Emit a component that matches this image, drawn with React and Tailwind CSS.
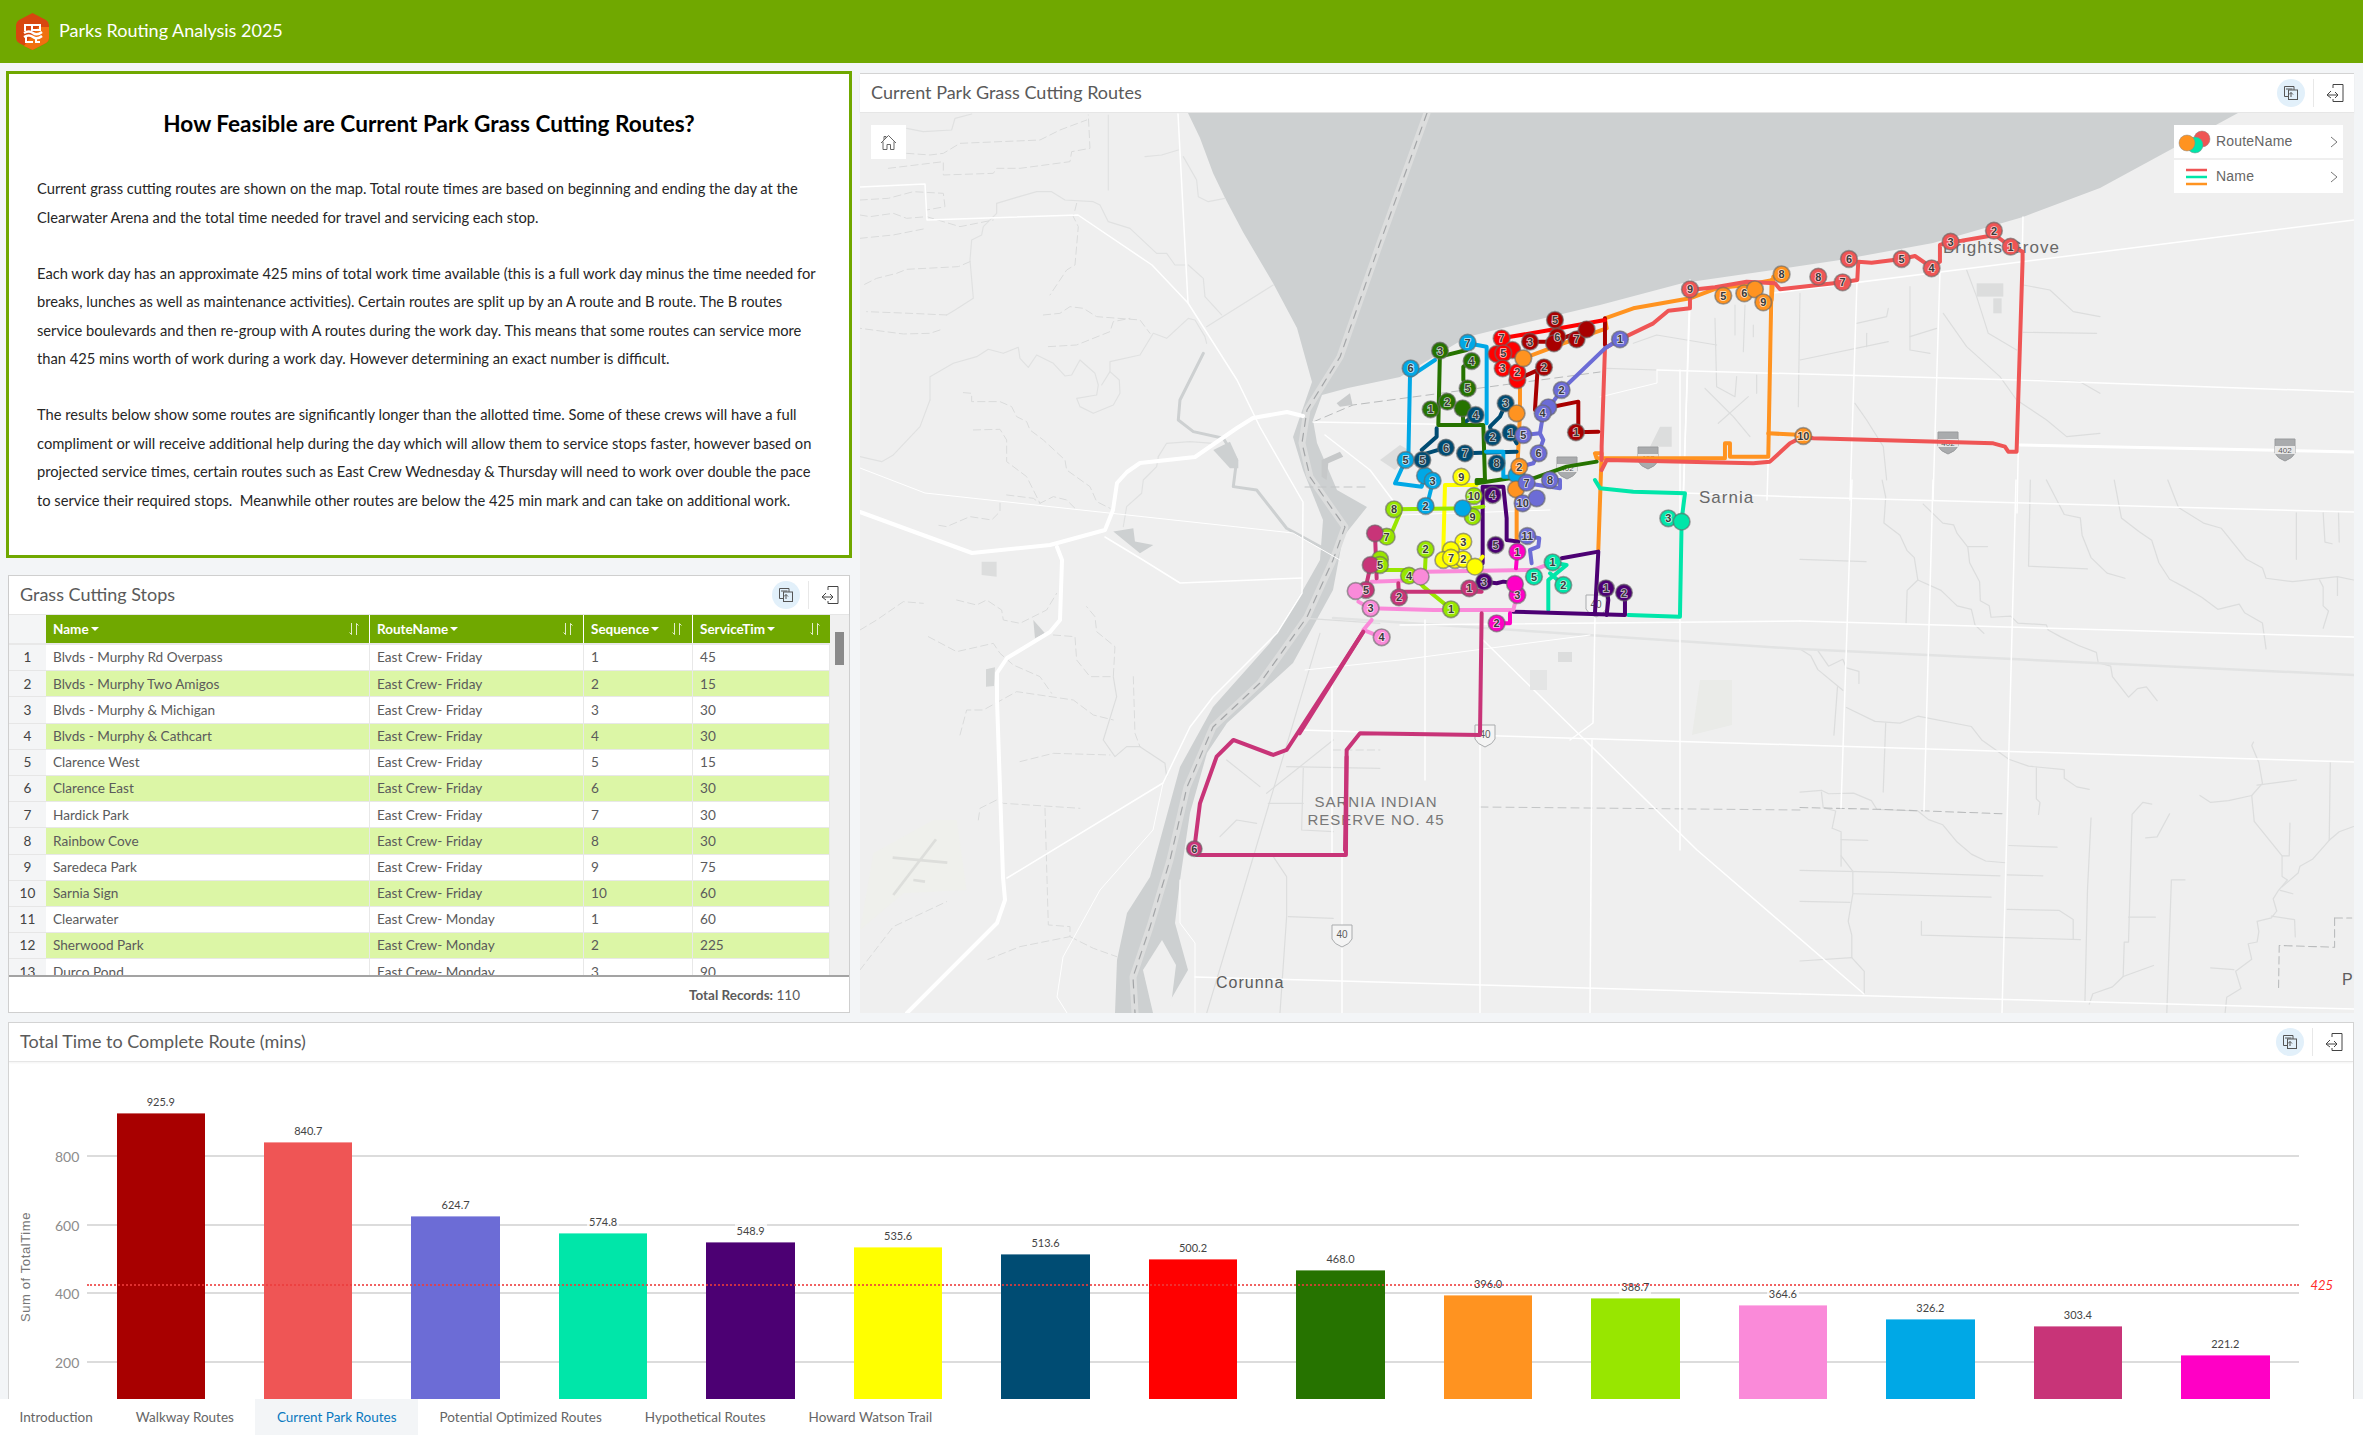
import React from 'react';

const C = {
  a: '#a80000', b: '#ef5555', c: '#6c6cd6', d: '#00e6a9', e: '#4c0073', f: '#ffff00', g: '#004c73', h: '#ff0000',
  i: '#267300', j: '#ff9320', k: '#98e600', l: '#fa8ad9', m: '#00a8e6', n: '#c83478', o: '#ff00c5',
};

const stops = [
  ['Blvds - Murphy Rd Overpass', 'East Crew- Friday', 1, 45],
  ['Blvds - Murphy Two Amigos', 'East Crew- Friday', 2, 15],
  ['Blvds - Murphy & Michigan', 'East Crew- Friday', 3, 30],
  ['Blvds - Murphy & Cathcart', 'East Crew- Friday', 4, 30],
  ['Clarence West', 'East Crew- Friday', 5, 15],
  ['Clarence East', 'East Crew- Friday', 6, 30],
  ['Hardick Park', 'East Crew- Friday', 7, 30],
  ['Rainbow Cove', 'East Crew- Friday', 8, 30],
  ['Saredeca Park', 'East Crew- Friday', 9, 75],
  ['Sarnia Sign', 'East Crew- Friday', 10, 60],
  ['Clearwater', 'East Crew- Monday', 1, 60],
  ['Sherwood Park', 'East Crew- Monday', 2, 225],
  ['Durco Pond', 'East Crew- Monday', 3, 90],
];

const bars = [
  [925.9, C.a], [840.7, C.b], [624.7, C.c], [574.8, C.d], [548.9, C.e], [535.6, C.f], [513.6, C.g], [500.2, C.h],
  [468.0, C.i], [396.0, C.j], [386.7, C.k], [364.6, C.l], [326.2, C.m], [303.4, C.n], [221.2, C.o],
];

// route lines, written in the coordinates of the city crop (1 unit = 1/3 px, origin 1300,280)
const routes = [
  ['j', '670,235 790,190 920,145 915,115 1000,85 1170,55 1250,25 1340,15 1420,0'],
  ['j', '1415,0 1405,530 1290,530 1290,490 1275,490 1275,535 890,535 885,520 905,520 895,810'],
  ['j', '660,235 660,400 650,610 650,780'],
  ['j', '1405,460 1510,465'],
  ['j', '1420,-10 1415,60'],
  ['b', '2132,-100 2085,-135 1985,-118 1952,-115 1920,-105 1920,-55 1895,-38 1845,-72 1805,-63 1715,-52 1675,-55 1672,0 1628,7 1440,28 1425,10 1340,5 1245,22 1170,30'],
  ['b', '2132,-100 2168,-85 2168,-60 2150,515 2125,515 2115,500 2080,490 1540,475 1510,470 1470,490 1410,545 1360,550 920,540 905,570'],
  ['b', '1170,30 1170,85 1105,92 1060,130 960,178 915,205 905,500 905,540'],
  ['a', '915,115 915,195'],
  ['a', '690,185 760,185 860,148'],
  ['a', '652,298 732,262 712,280 705,390 770,378 835,365 835,450 828,457 895,455'],
  ['h', '605,175 750,150 915,120'],
  ['h', '605,220 640,205'],
  ['h', '652,275 652,300'],
  ['c', '960,178 915,205 785,330 745,385 730,400 720,460 730,480 715,520 700,550 680,555'],
  ['c', '670,465 720,460'],
  ['c', '680,610 780,625 780,600 750,600'],
  ['c', '682,768 718,775 715,800 690,810 695,850'],
  ['d', '885,600 900,625 1000,635 1155,640 1145,720 1140,1010 985,1005'],
  ['d', '760,848 800,855 745,900 745,990'],
  ['d', '790,915 750,880'],
  ['e', '548,850 548,620 610,620 620,715 620,780 655,785'],
  ['e', '785,835 895,815 885,1000'],
  ['e', '640,995 975,1005 975,940'],
  ['e', '920,1005 925,960 920,925'],
  ['e', '552,905 590,910 610,905 645,910'],
  ['f', '530,615 435,615 430,810 430,840'],
  ['f', '548,830 525,860'],
  ['g', '618,370 600,410 570,440 578,472'],
  ['g', '632,458 650,490'],
  ['g', '495,520 650,515'],
  ['g', '438,503 380,520 365,540'],
  ['g', '410,445 410,470 365,510'],
  ['g', '525,405 490,430'],
  ['i', '420,212 415,435 550,435 555,600 530,600 530,610 630,595 700,595 800,560 890,545'],
  ['i', '420,230 500,210'],
  ['i', '515,245 490,260 490,300 505,325'],
  ['i', '488,385 490,435'],
  ['m', '503,190 560,200 560,430'],
  ['m', '405,240 330,290 325,540'],
  ['m', '317,540 285,610 365,620 375,590'],
  ['m', '375,590 400,600 380,680'],
  ['m', '558,515 610,515 610,590 650,590'],
  ['k', '282,688 520,685 550,680'],
  ['k', '300,700 270,770'],
  ['k', '240,870 325,870 370,920 450,985'],
  ['k', '378,808 375,870'],
  ['l', '362,890 380,875 700,870 760,848'],
  ['l', '215,905 360,900'],
  ['l', '212,985 400,990 640,990 650,950'],
  ['l', '175,965 210,985'],
  ['l', '215,1020 190,1050 245,1072'],
  ['n', '225,760 230,895'],
  ['n', '212,855 200,910 200,930'],
  ['n', '508,925 545,935 300,935 297,950 295,910'],
  ['n', '545,1000 540,1365 180,1360 140,1410 135,1710'],
  ['n', '190,1055 -1,1360'],
  ['o', '652,815 648,865'],
  ['o', '645,910 652,945'],
  ['o', '590,1030 630,1030 630,1000'],
];

// [label, x, y, colour] label '' = plain dot
const markers = [
  ['1', 2132, -100, 'b'], ['2', 2082, -148, 'b'], ['3', 1952, -115, 'b'], ['4', 1895, -35, 'b'], ['5', 1805, -63, 'b'], ['6', 1647, -63, 'b'], ['7', 1628, 7, 'b'], ['8', 1555, -10, 'b'], ['9', 1170, 28, 'b'],
  ['8', 1445, -17, 'j'], ['5', 1270, 47, 'j'], ['6', 1333, 40, 'j'], ['', 1365, 28, 'j'], ['9', 1390, 67, 'j'], ['10', 1510, 468, 'j'],
  ['5', 765, 120, 'a'], ['6', 772, 170, 'a'], ['7', 830, 178, 'a'], ['3', 690, 185, 'a'], ['', 762, 190, 'a'], ['', 860, 148, 'a'], ['2', 732, 262, 'a'], ['1', 828, 457, 'a'],
  ['7', 605, 175, 'h'], ['', 590, 222, 'h'], ['', 637, 210, 'h'], ['5', 610, 220, 'h'], ['3', 608, 265, 'h'], ['', 652, 300, 'h'], ['2', 652, 277, 'h'],
  ['3', 420, 212, 'i'], ['4', 515, 243, 'i'], ['5', 503, 325, 'i'], ['2', 442, 365, 'i'], ['1', 392, 388, 'i'], ['', 488, 385, 'i'],
  ['7', 503, 188, 'm'], ['6', 332, 265, 'm'], ['5', 317, 540, 'm'], ['', 375, 587, 'm'], ['3', 398, 602, 'm'], ['2', 377, 678, 'm'], ['', 650, 585, 'm'],
  ['3', 617, 370, 'g'], ['4', 527, 405, 'g'], ['1', 632, 458, 'g'], ['2', 578, 472, 'g'], ['6', 438, 503, 'g'], ['7', 495, 520, 'g'], ['5', 367, 540, 'g'], ['8', 590, 550, 'g'],
  ['', 670, 235, 'j'], ['', 650, 400, 'j'], ['2', 658, 560, 'j'], ['', 648, 628, 'j'],
  ['1', 960, 178, 'c'], ['2', 785, 330, 'c'], ['', 745, 382, 'c'], ['4', 728, 400, 'c'], ['5', 670, 465, 'c'], ['6', 716, 520, 'c'], ['8', 750, 600, 'c'], ['7', 680, 608, 'c'], ['10', 668, 670, 'c'], ['', 710, 655, 'c'], ['11', 682, 768, 'c'],
  ['10', 522, 648, 'k'], ['9', 518, 710, 'k'], ['', 488, 685, 'm'], ['8', 282, 688, 'k'], ['7', 260, 770, 'k'], ['2', 377, 808, 'k'], ['', 240, 838, 'k'], ['5', 240, 855, 'k'], ['4', 327, 887, 'k'], ['1', 453, 988, 'k'],
  ['9', 484, 590, 'f'], ['3', 490, 785, 'f'], ['', 453, 810, 'f'], ['', 465, 840, 'f'], ['2', 490, 838, 'f'], ['', 430, 840, 'f'], ['7', 453, 833, 'f'], ['', 525, 860, 'f'],
  ['4', 578, 645, 'e'], ['5', 587, 795, 'e'], ['3', 552, 905, 'e'], ['1', 918, 925, 'e'], ['2', 972, 938, 'e'],
  ['1', 652, 815, 'o'], ['3', 652, 945, 'o'], ['', 645, 912, 'o'], ['2', 590, 1030, 'o'],
  ['', 225, 760, 'n'], ['', 212, 855, 'n'], ['5', 198, 930, 'n'], ['2', 297, 952, 'n'], ['1', 508, 925, 'n'],
  ['', 362, 890, 'l'], ['', 167, 933, 'l'], ['3', 212, 985, 'l'], ['4', 245, 1072, 'l'],
  ['1', 758, 847, 'd'], ['5', 702, 890, 'd'], ['2', 790, 915, 'd'], ['3', 1105, 715, 'd'], ['', 1145, 725, 'd'],
];

// white roads in page pixels: [width, points]
const roads = [
  [4, '860,512 972,553 1050,545 1105,530 1113,510 1117,483 1127,472 1140,463 1195,457 1237,428 1253,418 1287,412 1303,416'],
  [4, '1057,547 1062,560 1060,620 1050,632 1007,658 997,673 997,700 1003,877 1005,900 997,923 907,1013'],
  [1.5, '860,187 925,184 927,220 1078,215 1152,265 1188,303 1237,380 1260,427 1303,502 1302,593 1277,633 1213,697 1190,727 1163,783 1007,878'],
  [1.5, '1178,114 1188,303'],
  [1, '860,468 925,493 1293,533 1340,560'],
  [1.5, '1105,537 1143,560 1180,583 1302,578'],
  [1, '1163,783 1153,830 1100,890 1063,957 1057,997 1067,1013'],
  [1, '1180,880 1180,923 1195,943 1195,1013'],
  [1.5, '1195,977 1800,994'],
  [1.5, '1800,497 2354,512'], [1.5, '1683,493 1800,497'],
  [1.5, '1400,625 1800,621'], [1.5, '1800,621 2354,637'],
  [1.5, '1300,730 1800,745 2354,762'],
  [1.5, '1800,994 2354,1009'],
  [1.5, '1852,480 1841,808'], [1.5, '1933,480 1924,811'], [1.5, '2016,480 2002,1013'],
  [1.5, '1595,617 1593,723 1570,740'], [1.5, '1592,740 1590,1013'], [1.5, '1483,640 1697,850 1864,994'],
  [1.5, '1680,370 1680,850'], [1.5, '1690,280 1680,613'],
  [1.5, '1657,370 2017,380 2354,392'], [1, '1600,397 1657,383 1657,370'],
  [3, '2020,445 2354,452'], [1.5, '1773,293 2100,252 2354,220'],
  [1.5, '2023,217 2017,513'], [1.5, '1940,270 1933,500'], [1.5, '1857,280 1850,500'], [1.5, '1773,300 1767,500'], [1.5, '1690,303 1683,500'],
  [1.5, '1313,422 1483,425'], [1.5, '1332,683 1332,853'], [1.5, '1342,857 1342,1013'], [1.5, '1480,737 1480,1013'],
  [1.5, '1425,620 1425,780'], [1, '1400,515 1550,510'], [1, '1305,670 1400,660 1590,635'],
  [1.5, '1325,435 1370,470 1400,510'],
];

const dashed8 = [
  '85,175 250,155 250,195 400,190 410,175 480,175 630,155 635,125 690,115 685,15',
  '140,130 210,135 250,130 300,100 540,90 600,60 680,30',
  '0,270 85,265 160,245 250,250 255,290 200,300',
  '0,315 30,320 100,310 140,325 200,320 300,350 400,330',
  '0,385 100,375 200,355',
  '330,455 295,470 140,478 110,490 50,505 10,525',
  '260,615 150,610 20,605',
  '240,660 210,670 130,672 0,655',
  '650,280 640,320 655,350 645,465 620,480 570,555',
  '550,615 600,610 630,590 670,595 710,620 840,630 870,670',
  '565,710 650,705 750,665 760,635 810,625',
  '310,848 335,850 335,875 420,875 455,890 470,920 500,935 510,960 550,990 615,1050 620,1080 690,1130 710,1175 750,1195',
  '340,960 420,958 440,990 440,1055 500,1100 520,1140 540,1180',
  '440,1155 520,1165 540,1180 580,1160 620,1170 645,1195',
  '420,1180 420,1205 395,1230 330,1220 260,1250 230,1245',
];
const solid8 = [
  '335,12 285,25 275,60 190,65 140,55',
  '745,15 745,240',
  '855,140 905,135 955,120',
  '970,140 1010,210 1015,260 1045,275 1095,265',
  '210,870 210,800 280,760 350,740 385,718 430,730 475,712 480,745 505,772 530,735 580,760 615,798 635,795 660,750 705,790 715,825 710,855 650,865 660,890 700,910 760,885 780,850 778,810 750,785 725,825',
  '210,870 180,950 100,1035 65,1055 0,1040',
  '750,785 750,755 840,735 880,670 920,685 985,625 1005,630 1035,680 1040,700',
  '985,465 1030,505 1035,560 1085,615',
  '1040,650 1240,525',
  '410,280 470,262 530,245 575,245 615,270 700,275 720,285 745,335 810,355 890,430 920,430 945,465 975,465',
  '410,280 410,310 370,350 365,375 335,390 330,450 340,565 285,600 260,615',
  '895,1040 920,1000 990,995 1060,1000',
  '895,1040 890,1070 850,1110 845,1150 800,1190 790,1250',
];
const dashed9 = [
  '0,210 50,180 130,125 190,130',
  '290,120 350,135 380,120 425,150 430,180 480,190 560,150 590,100',
  '205,230 290,275 400,250 420,280 460,315 540,350 575,400',
  '300,525 320,450 370,450 470,395 640,420 700,465 760,480',
  '580,225 645,230 650,300 690,350 760,350 765,260 710,215 705,170 680,140',
  '820,350 825,520 840,560',
  '480,605 580,580 750,585',
  '355,780 360,745 410,720 430,730 660,745',
  '555,745 565,1095 630,1100 630,1130 480,1160 380,1200',
  '630,1130 700,1165 770,1190',
  '0,1230 100,1100 260,1025',
  '1420,570 1560,570',
];
const solid9 = [
  '760,350 770,410 730,540 765,590 800,560 840,560 915,610 920,650',
  '1380,220 1040,1360',
  '1420,540 1220,700',
  '1240,890 1280,950 1280,1070 1260,1360',
  '1280,620 1560,625',
  '1330,625 1325,810 1420,815',
  '1225,730 1330,730',
  '1100,600 1200,680',
  '1080,830 1130,780 1190,790',
  '1285,1070 1420,1075',
  '1340,175 1560,190',
];
const solid10 = [
  '600,340 595,680', '600,540 865,485', '800,460 800,500', '930,320 930,510 990,520', '930,470 1010,445',
  '770,430 860,410 865,385', '1030,400 1100,500 1200,590 1250,660 1340,720 1400,770 1500,760',
  '1100,270 1130,350 1165,460 1250,510', '1270,315 1350,330 1420,395 1500,410', '1270,457 1490,460',
  '1250,600 1440,605 1500,640', '345,415 350,620 405,650 410,590', '315,625 400,710 450,770', '445,650 355,730',
  '470,585 470,640', '405,375 405,465', '435,375 430,515', '460,435 460,470', '20,565 170,570', '100,490 170,465 350,495',
  '765,670 800,720 850,800 860,900',
];
const solid11 = [
  '230,0 240,50 235,125 280,160 300,205 320,225 330,290 300,320 297,415',
  '330,290 395,320 440,365 480,375 490,420 515,445',
  '345,70 400,125 430,130 440,155 470,195 475,240 503,295 505,350 530,365 535,398 590,395 610,415 690,420 695,435 730,455 780,480 830,500 835,530 870,540 875,570 920,630 945,605 970,600 1000,640',
  '0,230 185,237', '470,193 525,193', '645,0 640,250 805,258',
  '690,0 710,40 740,100 785,110 790,160 815,225 860,270 910,285',
  '880,0 900,110 950,150 985,175 1005,240 1035,288 1075,310 1125,340 1170,375 1230,360 1245,385 1295,415 1305,490',
  '1030,0 1060,80 1130,125 1180,140 1250,230 1295,255 1305,285 1380,295 1505,280 1550,290',
  '1390,95 1390,230', '1465,95 1470,180 1490,185', '1508,95 1510,180', '1455,290 1465,310 1465,365 1480,380 1465,430', '1505,280 1505,335',
  '0,490 30,510 50,550 120,610', '50,495 80,540 120,520 130,545 165,555 165,590', '105,600 95,740',
  '130,660 210,700 280,705 330,685 480,715 510,755 585,810 640,830 740,840 740,865 775,890 810,897',
  '240,705 233,905', '662,835 662,925 672,935 668,970',
  '0,905 60,900 80,910 150,908 200,930 215,955 330,960 360,985 400,1000 440,1050 480,1085 520,1105 575,1110',
  '60,905 65,950 100,960 90,1010 115,1020 115,1120', '115,1090 148,1135 148,1200 135,1280 145,1320 145,1385 180,1425 180,1490',
  '115,1043 190,1045', '0,1132 260,1138 560,1148', '150,1200 535,1210', '0,1222 140,1225', '0,1395 145,1385',
  '585,1060 720,1065', '580,1145 680,1148', '580,1245 725,1248 765,1275 765,1332', '340,1280 340,1320 785,1333',
  '815,980 805,1190 798,1510', '985,940 960,935 930,970 920,1340 908,1340 905,1440 875,1470 820,1490 810,1520', '920,1268 995,1268', '905,1440 990,1408',
  '1035,968 1000,1035 968,1038', '1078,1160 1040,1160 1027,1550',
  '1270,760 1265,770 1285,820 1295,880 1265,915 1272,990 1350,1090 1350,1150 1365,1160 1340,1190 1325,1215 1335,1250 1320,1270 1280,1280 1285,1310 1280,1340 1255,1345 1265,1390 1220,1425 1235,1475 1195,1500 1190,1550',
  '1120,915 1150,935 1200,930 1265,915', '1280,885 1390,870', '1350,1090 1370,1090 1372,995', '1485,820 1482,1045 1435,1100 1400,1120 1395,1140 1350,1180',
  '1482,1045 1510,1020 1550,1005', '1345,1190 1380,1200', '1320,1265 1385,1275 1387,1325', '1150,1415 1215,1420',
];

const Line = ({ pts, ...rest }) => <polyline points={pts} fill="none" strokeLinejoin="round" strokeLinecap="round" {...rest} />;

const Shield = ({ x, y, label, dark }) => (
  <g transform={`translate(${x} ${y})`}>
    <path d="M-10,-10 L10,-10 L10,4 Q8,9 0,12 Q-8,9 -10,4 Z" fill={dark ? '#a9abad' : '#f4f4f4'} stroke={dark ? '#9a9c9e' : '#a9abad'} strokeWidth="1" />
    {dark && <rect x="-10" y="-3" width="20" height="8" fill="#e8e8e8" />}
    <text x="0" y={dark ? 4 : 3} textAnchor="middle" fontSize={dark ? 8 : 10} fontFamily="Liberation Sans, sans-serif" fill="#5c5c5c">{label}</text>
  </g>
);

const MapArt = () => (
  <svg viewBox="860 113 1494 900" className="block w-full h-full" preserveAspectRatio="none">
    <rect x="860" y="113" width="1494" height="900" fill="#efefef" />
    {/* lake and river */}
    <path
      d="M1188,113 L1200,138 L1213,173 L1225,198 L1243,232 L1273,283 L1297,328 L1312,382 L1293,437 L1303,470 L1323,520 L1320,560 L1303,590 L1270,643 L1213,707 L1180,767 L1150,877 L1127,913 L1117,960 L1115,1013 L1163,1013 L1188,970 L1175,923 L1180,880 L1190,813 L1207,753 L1227,723 L1293,663 L1333,590 L1343,537 L1367,507 L1337,490 L1317,443 L1313,420 L1322,395 L1348,388 L1400,377 L1467,337 L1507,327 L1600,305 L1683,283 L1773,270 L1840,260 L1933,243 L2023,217 L2100,188 L2238,113 Z"
      fill="#cdd0d1"
    />
    <path d="M1162,940 L1143,970 L1153,1013 L1170,1013 L1176,965 Z" fill="#efefef" />
    <Line pts="1427,113 1380,243 1340,357 1307,410 1302,443 1310,477 1345,527 1333,560 1307,617 1260,683 1213,727 1187,787 1170,860 1150,927 1133,977 1135,1013" stroke="#dcdddd" strokeWidth="7" />
    <Line pts="1427,113 1380,243 1340,357 1307,410 1302,443 1310,477 1345,527 1333,560 1307,617 1260,683 1213,727 1187,787 1170,860 1150,927 1133,977 1135,1013" stroke="#a3a5a7" strokeWidth="1.2" strokeDasharray="8 7" />
    <g transform="translate(860 110) scale(0.3333)">
      <Line pts="1030,730 960,870 955,930 1000,965 1090,985 1130,1050 1120,1130 1190,1140 1280,1255 1390,1315" stroke="#cdd0d1" strokeWidth="9" />
      <path d="M760,1265 L820,1255 L825,1295 L880,1305 L840,1330 Z" fill="#cdd0d1" />
      <path d="M1060,1020 L1110,995 L1135,1050 L1135,1075 L1110,1075 Z" fill="#cdd0d1" />
      <path d="M1385,1050 L1440,1025 L1450,1040 L1405,1060 L1400,1110 L1385,1100 Z" fill="#c6c8c9" />
      <path d="M1430,880 L1470,850 L1478,885 L1440,890 Z" fill="#c9cbcc" />
      {solid8.map((p, i) => <Line key={i} pts={p} stroke="#e0e1e1" strokeWidth="3.5" />)}
      {dashed8.map((p, i) => <Line key={i} pts={p} stroke="#dadbdb" strokeWidth="3" strokeDasharray="22 12" />)}
    </g>
    <g transform="translate(860 560) scale(0.3333)">
      <path d="M40,880 L220,780 L290,780 L320,990 L130,1000 L0,1110 Z" fill="#eff0ec" />
      <g stroke="#dddedb" strokeWidth="8" fill="none">
        <path d="M100,1005 L228,838" /><path d="M98,893 L262,908" /><path d="M160,960 L195,965" />
      </g>
      <path d="M365,5 L410,5 L410,50 L365,45 Z" fill="#dcdddd" />
      <path d="M520,180 L555,220 L525,235 Z" fill="#cfd1d2" />
      <path d="M378,328 L405,322 L402,378 L378,380 Z" fill="#d4d6d6" />
      {solid9.map((p, i) => <Line key={i} pts={p} stroke="#dcdddd" strokeWidth="3.5" />)}
      {dashed9.map((p, i) => <Line key={i} pts={p} stroke="#dadbdb" strokeWidth="3" strokeDasharray="22 12" />)}
    </g>
    <g transform="translate(1600 180) scale(0.3333)">
      <path d="M1130,310 L1210,310 L1210,350 L1130,350 Z" fill="#dcdddd" />
      <path d="M1180,355 L1205,355 L1205,400 L1180,400 Z" fill="#dcdddd" />
      <path d="M180,740 L215,740 L215,800 L150,800 Z" fill="#dcdddd" />
      {solid10.map((p, i) => <Line key={i} pts={p} stroke="#dcdddd" strokeWidth="3.5" />)}
    </g>
    <g transform="translate(1800 480) scale(0.3571 0.3448)">
      {solid11.map((p, i) => <Line key={i} pts={p} stroke="#dcdddd" strokeWidth="3.5" />)}
      <Line pts="0,950 220,955 570,968" stroke="#b9bbbc" strokeWidth="3" strokeDasharray="22 12" />
      <Line pts="1497,1270 1545,1270" stroke="#b9bbbc" strokeWidth="3" strokeDasharray="22 12" />
      <Line pts="1497,1270 1497,1355 1342,1350 1340,1480" stroke="#b9bbbc" strokeWidth="3" strokeDasharray="22 12" />
    </g>
    <Line pts="1333,618 1800,649 2354,675" stroke="#e2e3e3" strokeWidth="2.5" />
    <Line pts="1313,422 1353,405 1600,372" stroke="#b9bbbc" strokeWidth="1" strokeDasharray="8 5" />
    <Line pts="1305,487 1370,487" stroke="#c3c5c6" strokeWidth="1" strokeDasharray="8 5" />
    <Line pts="1480,807 1800,810" stroke="#c3c5c6" strokeWidth="1" strokeDasharray="8 5" />
    {roads.map(([w, p], i) => <Line key={i} pts={p} stroke="#ffffff" strokeWidth={w} />)}
    {/* city blocks */}
    <path d="M1380,460 L1400,445 L1412,452 L1395,470 Z" fill="#dcdddd" />
    <path d="M1530,670 L1547,670 L1547,690 L1530,690 Z" fill="#e4e5e5" />
    <path d="M1558,652 L1572,652 L1572,662 L1558,662 Z" fill="#dcdddd" />
    <path d="M1700,680 L1732,680 L1732,725 L1692,735 Z" fill="#eaebe8" />

    <Shield x={1567} y={467} label="402" dark />
    <Shield x={1648} y={457} label="402" dark />
    <Shield x={1948} y={442} label="402" dark />
    <Shield x={2285} y={449} label="402" dark />
    <Shield x={1342} y={935} label="40" />
    <Shield x={1596} y={605} label="40" />
    <Shield x={1485} y={735} label="40" />

    <g fontFamily="Liberation Sans, sans-serif">
      <text x="1699" y="503" fontSize="17" letterSpacing="1" fill="#686868">Sarnia</text>
      <text x="1943" y="253" fontSize="17" letterSpacing="1" fill="#686868">Brights Grove</text>
      <text x="1376" y="807" fontSize="15" letterSpacing="1" textAnchor="middle" fill="#777">SARNIA INDIAN</text>
      <text x="1376" y="825" fontSize="15" letterSpacing="1" textAnchor="middle" fill="#777">RESERVE NO. 45</text>
      <text x="1216" y="988" fontSize="16" letterSpacing="1" fill="#5c5c5c">Corunna</text>
      <text x="2342" y="985" fontSize="16" fill="#5c5c5c">P</text>
    </g>

    <g transform="translate(860 560) scale(0.3333)">
      <Line pts="1460,590 1458,885 1010,885 1003,866 1020,730 1070,590 1120,540 1240,585 1280,570 1410,370 1510,215" stroke={C.n} strokeWidth="12" />
    </g>
    <g transform="translate(1300 280) scale(0.3333)">
      {routes.map(([c, p], i) => <Line key={i} pts={p} stroke={C[c]} strokeWidth="12" />)}
      {markers.map(([t, x, y, c], i) => (
        <circle key={i} cx={x} cy={y} r="25" fill={C[c]} stroke="#666" strokeOpacity="0.6" strokeWidth="5" />
      ))}
      {markers.filter((m) => m[0]).map(([t, x, y], i) => (
        <text key={i} x={x} y={y + 12} textAnchor="middle" fontSize="33" fontWeight="700" fontFamily="Liberation Sans, sans-serif" fill="#3a3a3a" stroke="#ffffff" strokeOpacity="0.75" strokeWidth="5" paintOrder="stroke">{t}</text>
      ))}
    </g>
    <g transform="translate(860 560) scale(0.3333)">
      <circle cx="1003" cy="866" r="23" fill={C.n} stroke="#666" strokeOpacity="0.6" strokeWidth="5" />
      <text x="1003" y="878" textAnchor="middle" fontSize="33" fontWeight="700" fontFamily="Liberation Sans, sans-serif" fill="#3a3a3a" stroke="#ffffff" strokeOpacity="0.75" strokeWidth="5" paintOrder="stroke">6</text>
    </g>
  </svg>
);

const PanelIcons = () => (
  <div className="flex items-center">
    <div className="w-[28px] h-[28px] rounded-full bg-[#e2f0fa] flex items-center justify-center">
      <svg width="16" height="16" viewBox="0 0 16 16" fill="none" stroke="#555" strokeWidth="1">
        <path d="M5.5 11.5H1.5V1.5H11V5" />
        <rect x="5.5" y="5" width="9" height="9.5" />
        <path d="M3 4H9.5M10 9.5L8 7.5L6 9.5M8 7.5V12" />
      </svg>
    </div>
    <div className="w-px h-[28px] bg-[#e8e8e8] ml-[8px] mr-[12px]" />
    <svg width="18" height="20" viewBox="0 0 18 20" fill="none" stroke="#444" strokeWidth="1">
      <path d="M7 5V1.5H17V18.5H7V16" />
      <path d="M5 8L1 12L5 15M1.5 12H12M9 9L12 12L9 15" />
    </svg>
  </div>
);

const PanelTitle = ({ title, className }) => (
  <div className={`flex items-center justify-between shrink-0 border-b border-[#e6e6e6] shadow-[0_1px_2px_rgba(0,0,0,0.05)] pr-[10px] bg-white ${className}`}>
    <span className="text-[18px] text-[#5a5a5a]">{title}</span>
    <PanelIcons />
  </div>
);

const SortIcon = () => (
  <svg width="12" height="14" viewBox="0 0 12 14" fill="none" stroke="#fff" strokeOpacity="0.8" strokeWidth="1">
    <path d="M3.5 1V12.5M1.5 10.5L3.5 12.5M8.5 13V1.5M8.5 1.5L10.5 3.5" />
  </svg>
);

const cols = ['w-[324px]', 'w-[214px]', 'w-[109px]', 'w-[137px]'];

const HeadCell = ({ label, w }) => (
  <div className={`${w} shrink-0 h-full bg-[#70a800] flex items-center justify-between pl-[7px] pr-[9px] border-r border-white last:border-r-0`}>
    <span className="flex items-center gap-[2px] text-[13.5px] font-bold text-white">
      {label}
      <span className="w-0 h-0 border-x-[4px] border-x-transparent border-t-[4px] border-t-white mb-[1px]" />
    </span>
    <SortIcon />
  </div>
);

const StopsTable = () => (
  <div className="flex flex-col h-[438px] bg-white border border-[#cfcfcf]">
    <PanelTitle title="Grass Cutting Stops" className="h-[39px] pl-[11px] pb-[1px]" />
    <div className="flex h-[360px] shrink-0 overflow-hidden">
      <div className="w-[821px] shrink-0">
        <div className="flex h-[28px]">
          <div className="w-[37px] shrink-0 bg-[#f4f5f6]" />
          {['Name', 'RouteName', 'Sequence', 'ServiceTim'].map((h, i) => (
            <HeadCell key={h} label={h} w={cols[i]} />
          ))}
        </div>
        <div className="h-[2px] bg-[#e8e8e8]" />
        {stops.map((r, i) => (
          <div key={i} className="flex h-[26.2px] items-center text-[13.6px] text-[#5b5b5b]">
            <div className="w-[37px] shrink-0 h-full flex items-center justify-center bg-[#f4f5f6] text-[#444] border-b border-[#e6e6e6]">{i + 1}</div>
            {r.map((v, j) => (
              <div key={j} className={`${cols[j]} shrink-0 h-full flex items-center pl-[7px] border-r border-b border-[#e8e8e8] ${i % 2 ? 'bg-[#dcf6a6]' : 'bg-white'}`}>{v}</div>
            ))}
          </div>
        ))}
      </div>
      <div className="flex-1 bg-[#f0f0f0] pt-[17px] px-[5px]">
        <div className="h-[33px] bg-[#8a8a8a]" />
      </div>
    </div>
    <div className="flex-1 border-t-2 border-[#a3a3a3] flex items-center justify-end pr-[49px] pt-[2px] text-[13.5px] text-[#5b5b5b]">
      <span><b className="font-bold">Total Records:</b> 110</span>
    </div>
  </div>
);

const Chart = () => (
  <div className="h-[377px] ml-[8px] mt-[9px] w-[2346px] shrink-0 bg-white border border-[#d3d3d3] border-b-0 flex flex-col overflow-hidden">
    <PanelTitle title="Total Time to Complete Route (mins)" className="h-[39px] pl-[11px] pb-[1px]" />
    <div className="relative flex-1 pl-[78px] pr-[54px]">
      <div className="absolute left-[17px] top-[205px] -translate-x-1/2 -translate-y-1/2 -rotate-90 whitespace-nowrap text-[13px] text-[#777] [font-family:'Liberation_Sans',sans-serif] tracking-[0.6px]">Sum of TotalTime</div>
      {[[800, 'top-[94px]'], [600, 'top-[163px]'], [400, 'top-[231px]'], [200, 'top-[300px]']].map(([v, t]) => (
        <div key={v} className={`absolute left-[46px] right-[54px] ${t} flex items-center h-0`}>
          <span className="w-[32px] text-[14px] text-[#8c8c8c]">{v}</span>
          <span className="flex-1 h-[1.5px] bg-[#dcdcdc]" />
        </div>
      ))}
      <div className="relative h-full flex">
        {bars.map(([v, c]) => (
          <div key={v} className="flex-1 flex flex-col items-center justify-end">
            <span className="text-[11px] leading-[14px] mb-[4px] text-[#444] bg-white/70 px-[2px]">{v.toFixed(1)}</span>
            <div className="w-[60%] border-t border-white/40" style={{ height: (v - 91.5) * 0.343, backgroundColor: c }} />
          </div>
        ))}
      </div>
      <div className="absolute left-[78px] right-[54px] top-[222px] border-t-2 border-dotted border-[#ec3b3b]/80" />
      <span className="absolute right-[20px] top-[214px] text-[13px] italic text-[#ff2a2a]">425</span>
    </div>
  </div>
);

const tabs = ['Introduction', 'Walkway Routes', 'Current Park Routes', 'Potential Optimized Routes', 'Hypothetical Routes', 'Howard Watson Trail'];

const Logo = () => (
  <svg width="33" height="37" viewBox="0 0 33 37">
    <path d="M16.5 0L30 7Q33 9 33 12V25Q33 28 30 30L16.5 37L3 30Q0 28 0 25V12Q0 9 3 7Z" fill="#d8460f" />
    <path d="M33 14V25Q33 28 30 30L16.5 37L8 33L22 14Z" fill="#f0700f" />
    <g fill="none" stroke="#fff" strokeWidth="2">
      <path d="M9 18V12H16M14 12H24V17H16V12" />
      <path d="M8 20Q13 17 17 20T26 19" strokeWidth="2.4" />
      <path d="M8 24Q13 21 17 24T26 23" strokeWidth="2.4" />
      <path d="M10 24V29H17M20 25V29H24" />
    </g>
  </svg>
);

export default function App() {
  return (
    <div className="w-[2363px] h-[1435px] overflow-hidden flex flex-col bg-[#f3f5f7] [font-family:Lato,sans-serif]">
      <header className="h-[63px] shrink-0 bg-[#70a800] flex items-center pl-[16px] gap-[10px]">
        <Logo />
        <span className="text-[18px] text-white mb-[2px]">Parks Routing Analysis 2025</span>
      </header>

      <div className="flex h-[950px] pt-[8px] pl-[6px] shrink-0">
        <div className="w-[846px] shrink-0 flex flex-col">
          <div className="h-[487px] shrink-0 bg-white border-[3px] border-[#70a800] px-[28px] text-[14.7px] leading-[28.5px] text-[#262626]">
            <h1 className="text-center text-[22.6px] font-bold text-black mt-[35px] mb-[35px] leading-[30px]">How Feasible are Current Park Grass Cutting Routes?</h1>
            <p>Current grass cutting routes are shown on the map. Total route times are based on beginning and ending the day at the Clearwater Arena and the total time needed for travel and servicing each stop.</p>
            <p className="mt-[27.5px]">Each work day has an approximate 425 mins of total work time available (this is a full work day minus the time needed for breaks, lunches as well as maintenance activities). Certain routes are split up by an A route and B route. The B routes service boulevards and then re-group with A routes during the work day. This means that some routes can service more than 425 mins worth of work during a work day. However determining an exact number is difficult.</p>
            <p className="mt-[27.5px]">The results below show some routes are significantly longer than the allotted time. Some of these crews will have a full compliment or will receive additional help during the day which will allow them to service stops faster, however based on projected service times, certain routes such as East Crew Wednesday &amp; Thursday will need to work over double the pace to service their required stops.&nbsp; Meanwhile other routes are below the 425 min mark and can take on additional work.</p>
          </div>
          <div className="ml-[2px] w-[842px] mt-[17px] shrink-0">
            <StopsTable />
          </div>
        </div>

        <div className="ml-[8px] mt-[2px] w-[1494px] h-[940px] shrink-0 flex flex-col bg-white border-t border-[#d3d3d3]">
          <PanelTitle title="Current Park Grass Cutting Routes" className="h-[39px] pl-[11px] pb-[1px]" />
          <div className="relative flex-1 overflow-hidden">
            <MapArt />
            <button className="absolute left-[11px] top-[12px] w-[35px] h-[34px] bg-white flex items-center justify-center">
              <svg width="17" height="17" viewBox="0 0 17 17" fill="none" stroke="#666" strokeWidth="1">
                <path d="M1 9L8.5 1.5L16 9M3 7.5V15.5H7V10.5H10.5V15.5H14V7.5M4 6V2.5H6V4" />
              </svg>
            </button>
            <div className="absolute right-[11px] top-[12px] w-[169px] flex flex-col gap-[2px]">
              {['RouteName', 'Name'].map((n, i) => (
                <div key={n} className="h-[33px] bg-white flex items-center justify-between pl-[3px] pr-[5px] text-[14px] text-[#666] [font-family:'Liberation_Sans',sans-serif]">
                  <span className="flex items-center">
                    {i === 0 ? (
                      <svg width="36" height="28" viewBox="0 0 36 28">
                        <circle cx="25" cy="11" r="8" fill="#ef5555" stroke="#888" strokeWidth="0.5" />
                        <circle cx="18" cy="17" r="8" fill="#00e6a9" stroke="#888" strokeWidth="0.5" />
                        <circle cx="10" cy="15" r="8" fill="#ff9320" stroke="#888" strokeWidth="0.5" />
                      </svg>
                    ) : (
                      <svg width="36" height="20" viewBox="0 0 36 20">
                        <path d="M9 3H30" stroke="#ef5555" strokeWidth="2.5" />
                        <path d="M9 10H30" stroke="#00e6a9" strokeWidth="2.5" />
                        <path d="M9 17H30" stroke="#ff9320" strokeWidth="2.5" />
                      </svg>
                    )}
                    <span className="ml-[3px] tracking-[0.2px]">{n}</span>
                  </span>
                  <svg width="8" height="12" viewBox="0 0 8 12" fill="none" stroke="#777" strokeWidth="1"><path d="M1 1L7 6L1 11" /></svg>
                </div>
              ))}
            </div>
          </div>
        </div>
      </div>

      <Chart />

      <nav className="h-[36px] shrink-0 bg-white flex items-stretch -ml-[2px]">
        {tabs.map((t, i) => (
          <div key={t} className={`px-[21.5px] flex items-center text-[13.5px] ${i === 2 ? 'bg-[#f3f5f7] text-[#0a79bf]' : 'text-[#666]'}`}>{t}</div>
        ))}
      </nav>
    </div>
  );
}
